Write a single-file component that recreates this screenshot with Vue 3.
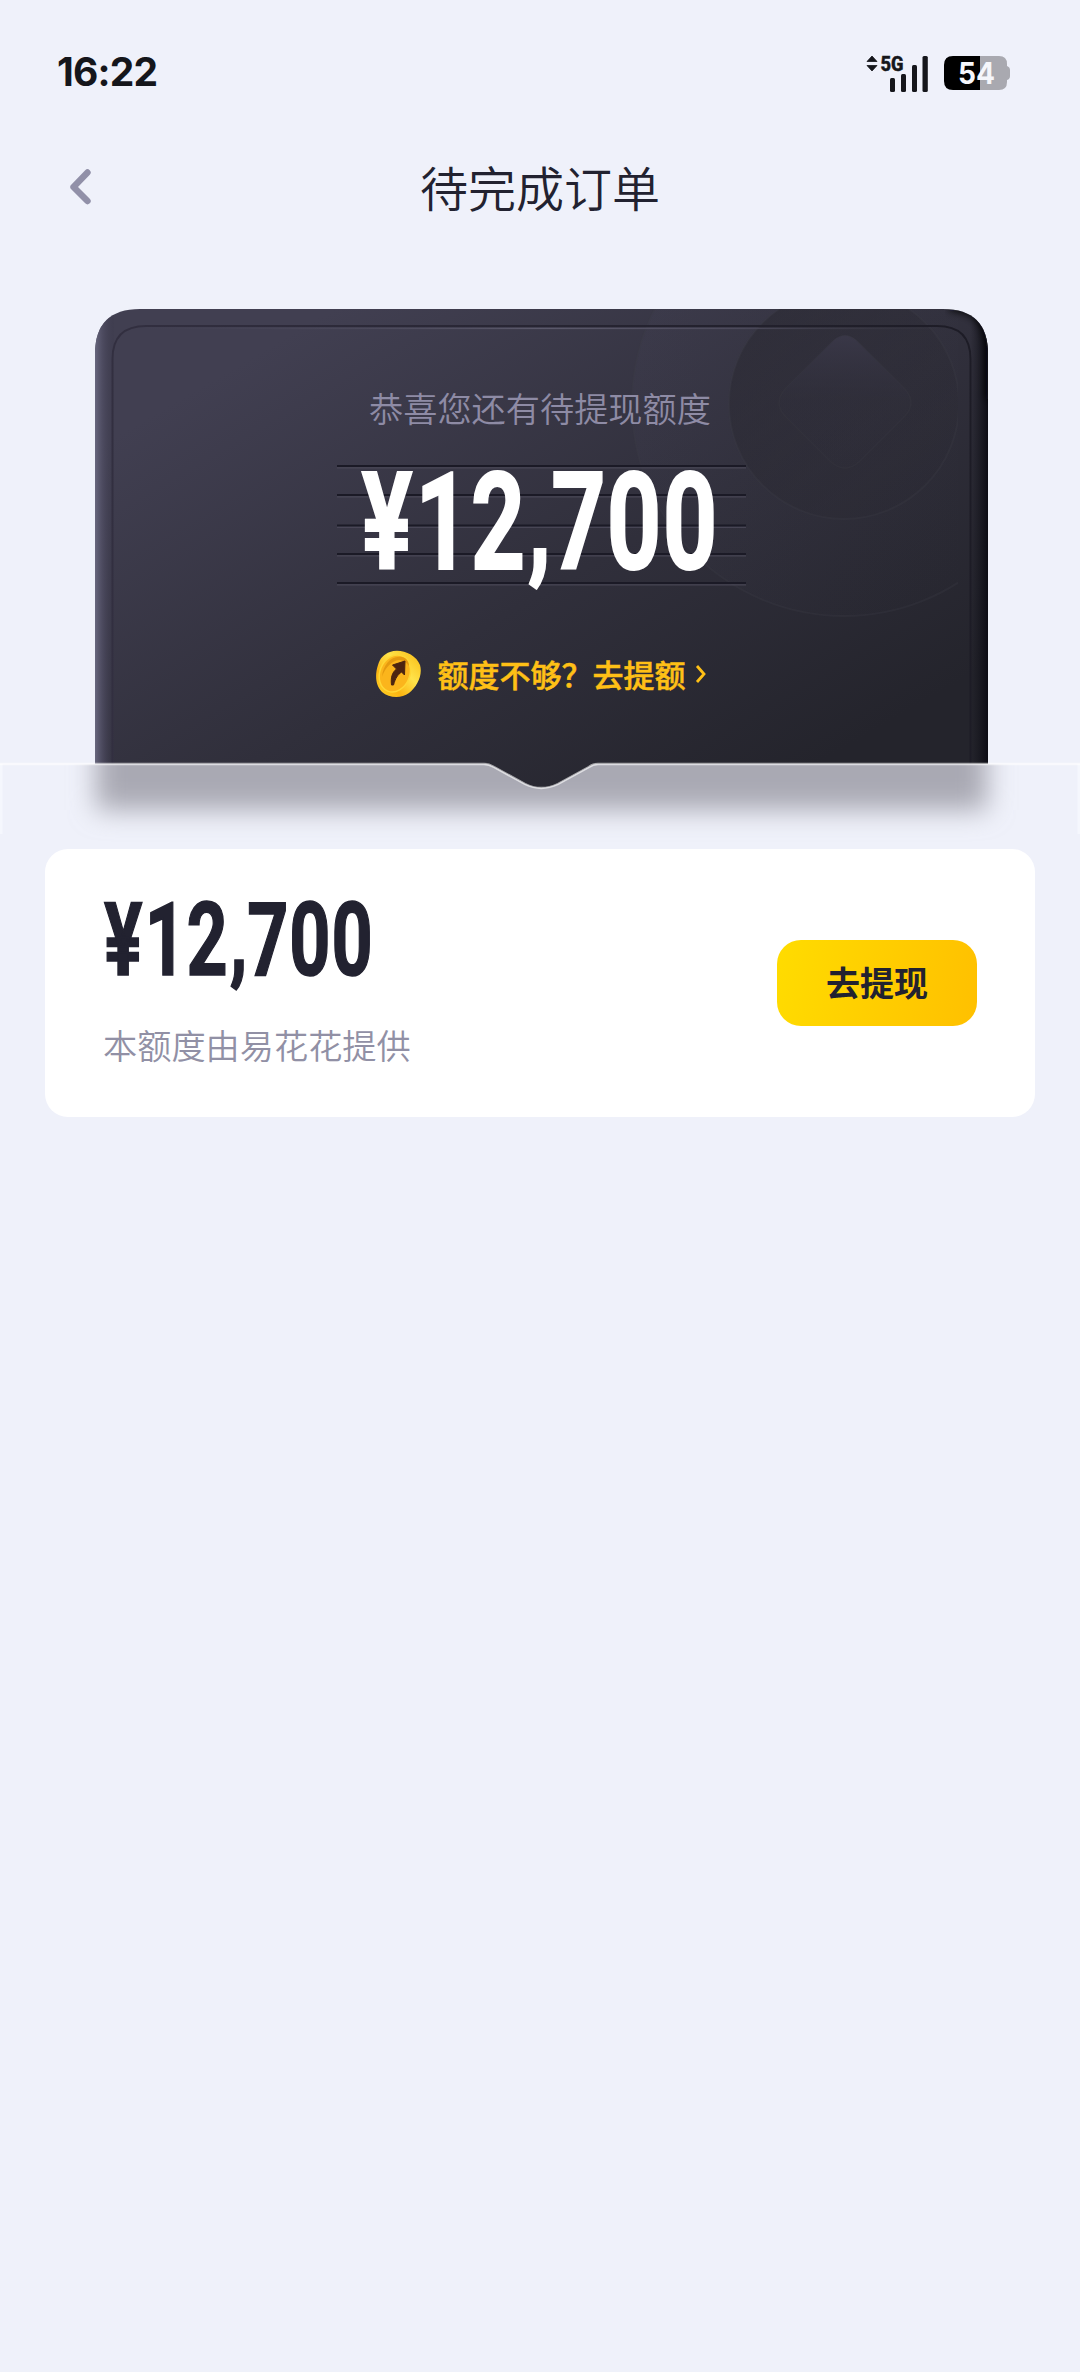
<script setup>
// Condensed amount: each character is placed on its own centre.
const stretch = 0.7
const glyphs = '¥12,700'
const centres = [27, 82.5, 138, 179.5, 218.5, 274, 330]
const xs = centres.map(c => (c / stretch).toFixed(2)).join(' ')
const ys = '109 109 109 105 109 109 109'
const grooves = [157, 186, 216.5, 245, 274]
</script>

<template>
  <main class="page">
    <header class="status">
      <span class="clock">16:22</span>
      <div class="status-right">
        <svg class="signal" width="64" height="40" viewBox="0 0 64 40">
          <path d="M1 9.5 6 4l5 5.5zM1 13.5h10L6 19z" fill="#15161b" stroke="#15161b" stroke-width=".8" stroke-linejoin="round" />
          <text x="14.500" y="19" class="net" textLength="23" lengthAdjust="spacingAndGlyphs">5G</text>
          <g fill="#15161b">
            <rect x="24" y="26" width="5" height="14" rx="1.5" />
            <rect x="35" y="22" width="5" height="18" rx="1.5" />
            <rect x="46" y="13" width="5" height="27" rx="1.5" />
            <rect x="56.5" y="4" width="5.3" height="36" rx="1.5" />
          </g>
        </svg>
        <svg class="battery" width="67" height="36" viewBox="0 0 67 36">
          <path d="M36 1h19q8 0 8 8v2q3 1 3 4v6q0 3-3 4v2q0 8-8 8H36z" fill="#a9a9b0" />
          <path d="M36 1H9Q0 1 0 10v16q0 9 9 9h27z" fill="#000" />
          <text x="14" y="29" textLength="37" lengthAdjust="spacingAndGlyphs" class="level">54</text>
        </svg>
      </div>
    </header>

    <nav class="nav">
      <svg class="back" width="24" height="38" viewBox="0 0 24 38">
        <path d="M18.5 4.5 4.5 19l14 14" fill="none" stroke="#9190a8" stroke-width="6.4" stroke-linecap="round" stroke-linejoin="round" />
      </svg>
      <h1>待完成订单</h1>
    </nav>

    <section class="hero">
      <svg class="art" width="1080" height="540" viewBox="0 0 1080 540">
        <defs>
          <linearGradient id="body" gradientUnits="userSpaceOnUse" x1="300" y1="20" x2="620" y2="570">
            <stop offset="0" stop-color="#413f51" />
            <stop offset=".55" stop-color="#302f3b" />
            <stop offset="1" stop-color="#24242c" />
          </linearGradient>
          <linearGradient id="edgeL" x1="0" x2="1">
            <stop offset="0" stop-color="#68677e" />
            <stop offset=".4" stop-color="#514f65" stop-opacity=".75" />
            <stop offset="1" stop-color="#3a384a" stop-opacity=".2" />
          </linearGradient>
          <linearGradient id="edgeR" x1="0" x2="1">
            <stop offset="0" stop-color="#15151c" stop-opacity="0" />
            <stop offset="1" stop-color="#0c0c14" />
          </linearGradient>
          <linearGradient id="rimDark" x1="0" x2="1">
            <stop offset="0" stop-color="#322f40" />
            <stop offset="1" stop-color="#1d1c26" />
          </linearGradient>
          <linearGradient id="rimLight" x1="0" x2="1">
            <stop offset="0" stop-color="#4b495b" stop-opacity="0" />
            <stop offset=".5" stop-color="#5b596b" />
            <stop offset=".75" stop-color="#4b495a" />
            <stop offset="1" stop-color="#35343f" stop-opacity=".3" />
          </linearGradient>
          <linearGradient id="gem" x1="0" x2="0" y1="0" y2="1">
            <stop offset="0" stop-color="#3b394a" stop-opacity=".85" />
            <stop offset=".5" stop-color="#302f3b" stop-opacity=".35" />
            <stop offset="1" stop-color="#302f3b" stop-opacity=".1" />
          </linearGradient>
          <linearGradient id="ring" x1="0" x2="1" y1="0" y2=".6">
            <stop offset="0" stop-color="#47455a" stop-opacity=".5" />
            <stop offset="1" stop-color="#30303b" stop-opacity="0" />
          </linearGradient>
          <linearGradient id="disc" x1="0" x2="1" y1="0" y2=".8">
            <stop offset="0" stop-color="#2a2932" stop-opacity=".65" />
            <stop offset="1" stop-color="#2a2932" stop-opacity=".2" />
          </linearGradient>
          <clipPath id="card"><path d="M95 455V45Q95 0 140 0H943Q988 0 988 45V481H95z" /></clipPath>
          <clipPath id="panel"><rect x="100" y="0" width="858" height="455" /></clipPath>
          <clipPath id="sheet"><path d="M0 455H484Q489 455 494 458L525 475Q541 483 558 475L589 458Q593 455 598 455H1080V540H0z" /></clipPath>
          <filter id="soft" x="-10%" y="-40%" width="120%" height="180%"><feGaussianBlur stdDeviation="13.500" /></filter>
          <filter id="cornerBlur"><feGaussianBlur stdDeviation="4" /></filter>
        </defs>

        <g clip-path="url(#card)">
          <rect x="95" width="893" height="481" fill="url(#body)" />
          <g clip-path="url(#panel)">
            <circle cx="844" cy="95" r="212" fill="url(#ring)" opacity=".6" />
            <circle cx="844" cy="95" r="212" fill="none" stroke="#3b3a47" stroke-opacity=".3" stroke-width="2" />
            <circle cx="844" cy="95" r="115" fill="url(#disc)" />
            <circle cx="844" cy="95" r="115" fill="none" stroke="#3b3a45" stroke-opacity=".3" stroke-width="2" />
            <path d="M834 31Q845 22 856 31L905 80Q917 94 905 107L859 153Q845 165 831 153L785 107Q773 94 785 80z" fill="url(#gem)" stroke="#3b3a45" stroke-opacity=".25" stroke-width="1.5" />
          </g>
          <rect x="95" width="19" height="481" fill="url(#edgeL)" />
          <rect x="970" width="18" height="481" fill="url(#edgeR)" />
          <path d="M950 -3Q991 -3 991 45V90" fill="none" stroke="#08080f" stroke-width="9" filter="url(#cornerBlur)" />
          <path d="M112.500 481V50Q112.500 17 146 17H937Q970.500 17 970.500 50V481" fill="none" stroke="url(#rimDark)" stroke-width="2" />
          <rect x="146" y="18.800" width="791" height="1.300" fill="url(#rimLight)" />
          <g v-for="y in grooves" :key="y">
            <path :d="`M337 ${y}H746`" stroke="#1b1a26" stroke-width="2" />
            <path :d="`M337 ${y + 1.8}H746`" stroke="#4d4b5b" stroke-width="1.2" stroke-opacity=".8" />
          </g>
        </g>

        <g clip-path="url(#sheet)">
          <rect y="450" width="1080" height="90" fill="#eff1fa" />
          <rect x="96" y="380" width="891" height="121" fill="#a9a9b3" filter="url(#soft)" />
          <path d="M1 455V525M1079 455V525" stroke="#f8f9fd" stroke-opacity=".7" stroke-width="3" />
        </g>
        <path d="M0 455H484Q489 455 494 458L525 475Q541 483 558 475L589 458Q593 455 598 455H1080" fill="none" stroke="#fff" stroke-opacity=".6" stroke-width="2.4" />
      </svg>

      <div class="hero-content">
        <p class="hint">恭喜您还有待提现额度</p>
        <svg class="amount" width="360" height="190" viewBox="0 -30 360 190">
          <text :x="xs" :y="ys" :transform="`scale(${stretch} 1)`" text-anchor="middle" fill="#fff" stroke="#fff">{{ glyphs }}</text>
        </svg>
        <div class="promo">
          <svg width="46" height="50" viewBox="0 0 46 50">
            <defs>
              <linearGradient id="coin" x1="0" y1="1" x2="1" y2="0">
                <stop offset="0" stop-color="#ffd52a" />
                <stop offset=".3" stop-color="#fbb512" />
                <stop offset=".6" stop-color="#ffe34a" />
                <stop offset="1" stop-color="#f8b80f" />
              </linearGradient>
            </defs>
            <path d="M14 3C24-1 40 5 44 16c3 10-3 22-11 28-8 6-20 5-27-1C-1 36-1 25 2 16 4 9 8 5 14 3z" fill="url(#coin)" />
            <ellipse cx="19" cy="24.500" rx="15" ry="19" transform="rotate(22 19 24)" fill="#fbb51c" stroke="#ffd735" stroke-width="1.500" />
            <path d="M6 28C7 15 16 6 26 8c5 1 7 5 7 9-4-6-10-8-16-4-6 4-9 9-11 15z" fill="#e59a10" />
            <path d="M15.500 36c-1-8 1-13 5-16l-4-4 12.500-4-.5 14-3-3c-4 3-6 6-8 13z" fill="#4c2410" stroke="#4c2410" stroke-linejoin="round" />
          </svg>
          <span>额度不够？去提额</span>
          <svg class="more" width="12" height="20" viewBox="0 0 12 20"><path d="M2 2 9 10 2 18" fill="none" stroke="#ffc016" stroke-width="2.8" /></svg>
        </div>
      </div>
    </section>

    <section class="offer">
      <div class="offer-info">
        <svg class="amount" width="271.800" height="143.450" viewBox="0 -30 360 190">
          <text :x="xs" :y="ys" :transform="`scale(${stretch} 1)`" text-anchor="middle" fill="#222230" stroke="#222230">{{ glyphs }}</text>
        </svg>
        <p>本额度由易花花提供</p>
      </div>
      <button>去提现</button>
    </section>
  </main>
</template>

<style>
body { background: #eff1fa; }
</style>

<style scoped>
* { box-sizing: border-box; }
.page {
  min-height: 2372px;
  background: #eff1fa;
  font-family: "Noto Sans CJK SC", sans-serif;
  color: #222230;
}
p, h1 { margin: 0; }
svg { display: block; flex: none; }
.status {
  height: 144px;
  padding: 0 69px 0 57px;
  display: flex;
  align-items: center;
  justify-content: space-between;
}
.clock {
  font: 650 39px/48px Inter, sans-serif;
  letter-spacing: -.8px;
  color: #15161b;
}
.status-right { display: flex; align-items: center; gap: 14px; padding-top: 1px; }
.signal { margin-top: -2px; }
.net { font: 800 21px Roboto, sans-serif; fill: #15161b; stroke: #15161b; stroke-width: .5px; }
.level { font: 700 30px Inter, sans-serif; fill: #f5f6fb; }
.nav {
  height: 90px;
  padding: 0 69px;
  display: grid;
  grid-template-columns: 24px 1fr 24px;
  align-items: center;
}
.back { margin-top: -5px; }
h1 {
  margin-top: -6px;
  text-align: center;
  font-size: 48px;
  line-height: 72px;
  font-weight: 350;
}
.hero { display: grid; margin-top: 75px; }
.art, .hero-content { grid-area: 1 / 1; }
.hero-content {
  display: flex;
  flex-direction: column;
  align-items: center;
  padding-top: 73px;
}
.hint {
  font-size: 34.2px;
  line-height: 50px;
  font-weight: 350;
  color: #8e8ba5;
}
.amount text {
  font-family: Roboto, sans-serif;
  font-size: 136px;
  font-weight: 700;
  stroke-width: 2px;
}
.hero .amount { margin: -2px 0 29px; }
.promo {
  display: flex;
  align-items: center;
  padding-left: 2px;
  color: #ffc016;
  font-size: 31px;
  line-height: 50px;
  font-weight: 500;
  -webkit-text-stroke: .5px #ffc016;
}
.promo span { margin-left: 16px; }
.more { margin-left: 9px; }
.offer {
  width: 990px;
  height: 268px;
  margin: 0 auto;
  padding: 0 58px 0 58px;
  display: flex;
  align-items: center;
  justify-content: space-between;
  border-radius: 23px;
  background: #fff;
}
.offer-info .amount { margin-top: -23px; }
.offer-info p {
  margin-top: 6px;
  margin-bottom: 4px;
  font-size: 34.200px;
  line-height: 50px;
  font-weight: 350;
  color: #9190a5;
}
button {
  width: 200px;
  height: 86px;
  border: 0;
  padding: 0 0 3px;
  border-radius: 24px;
  background: linear-gradient(100deg, #ffdc00, #ffc000);
  font: 700 34px/50px "Noto Sans CJK SC", sans-serif;
  color: #222230;
}
</style>
